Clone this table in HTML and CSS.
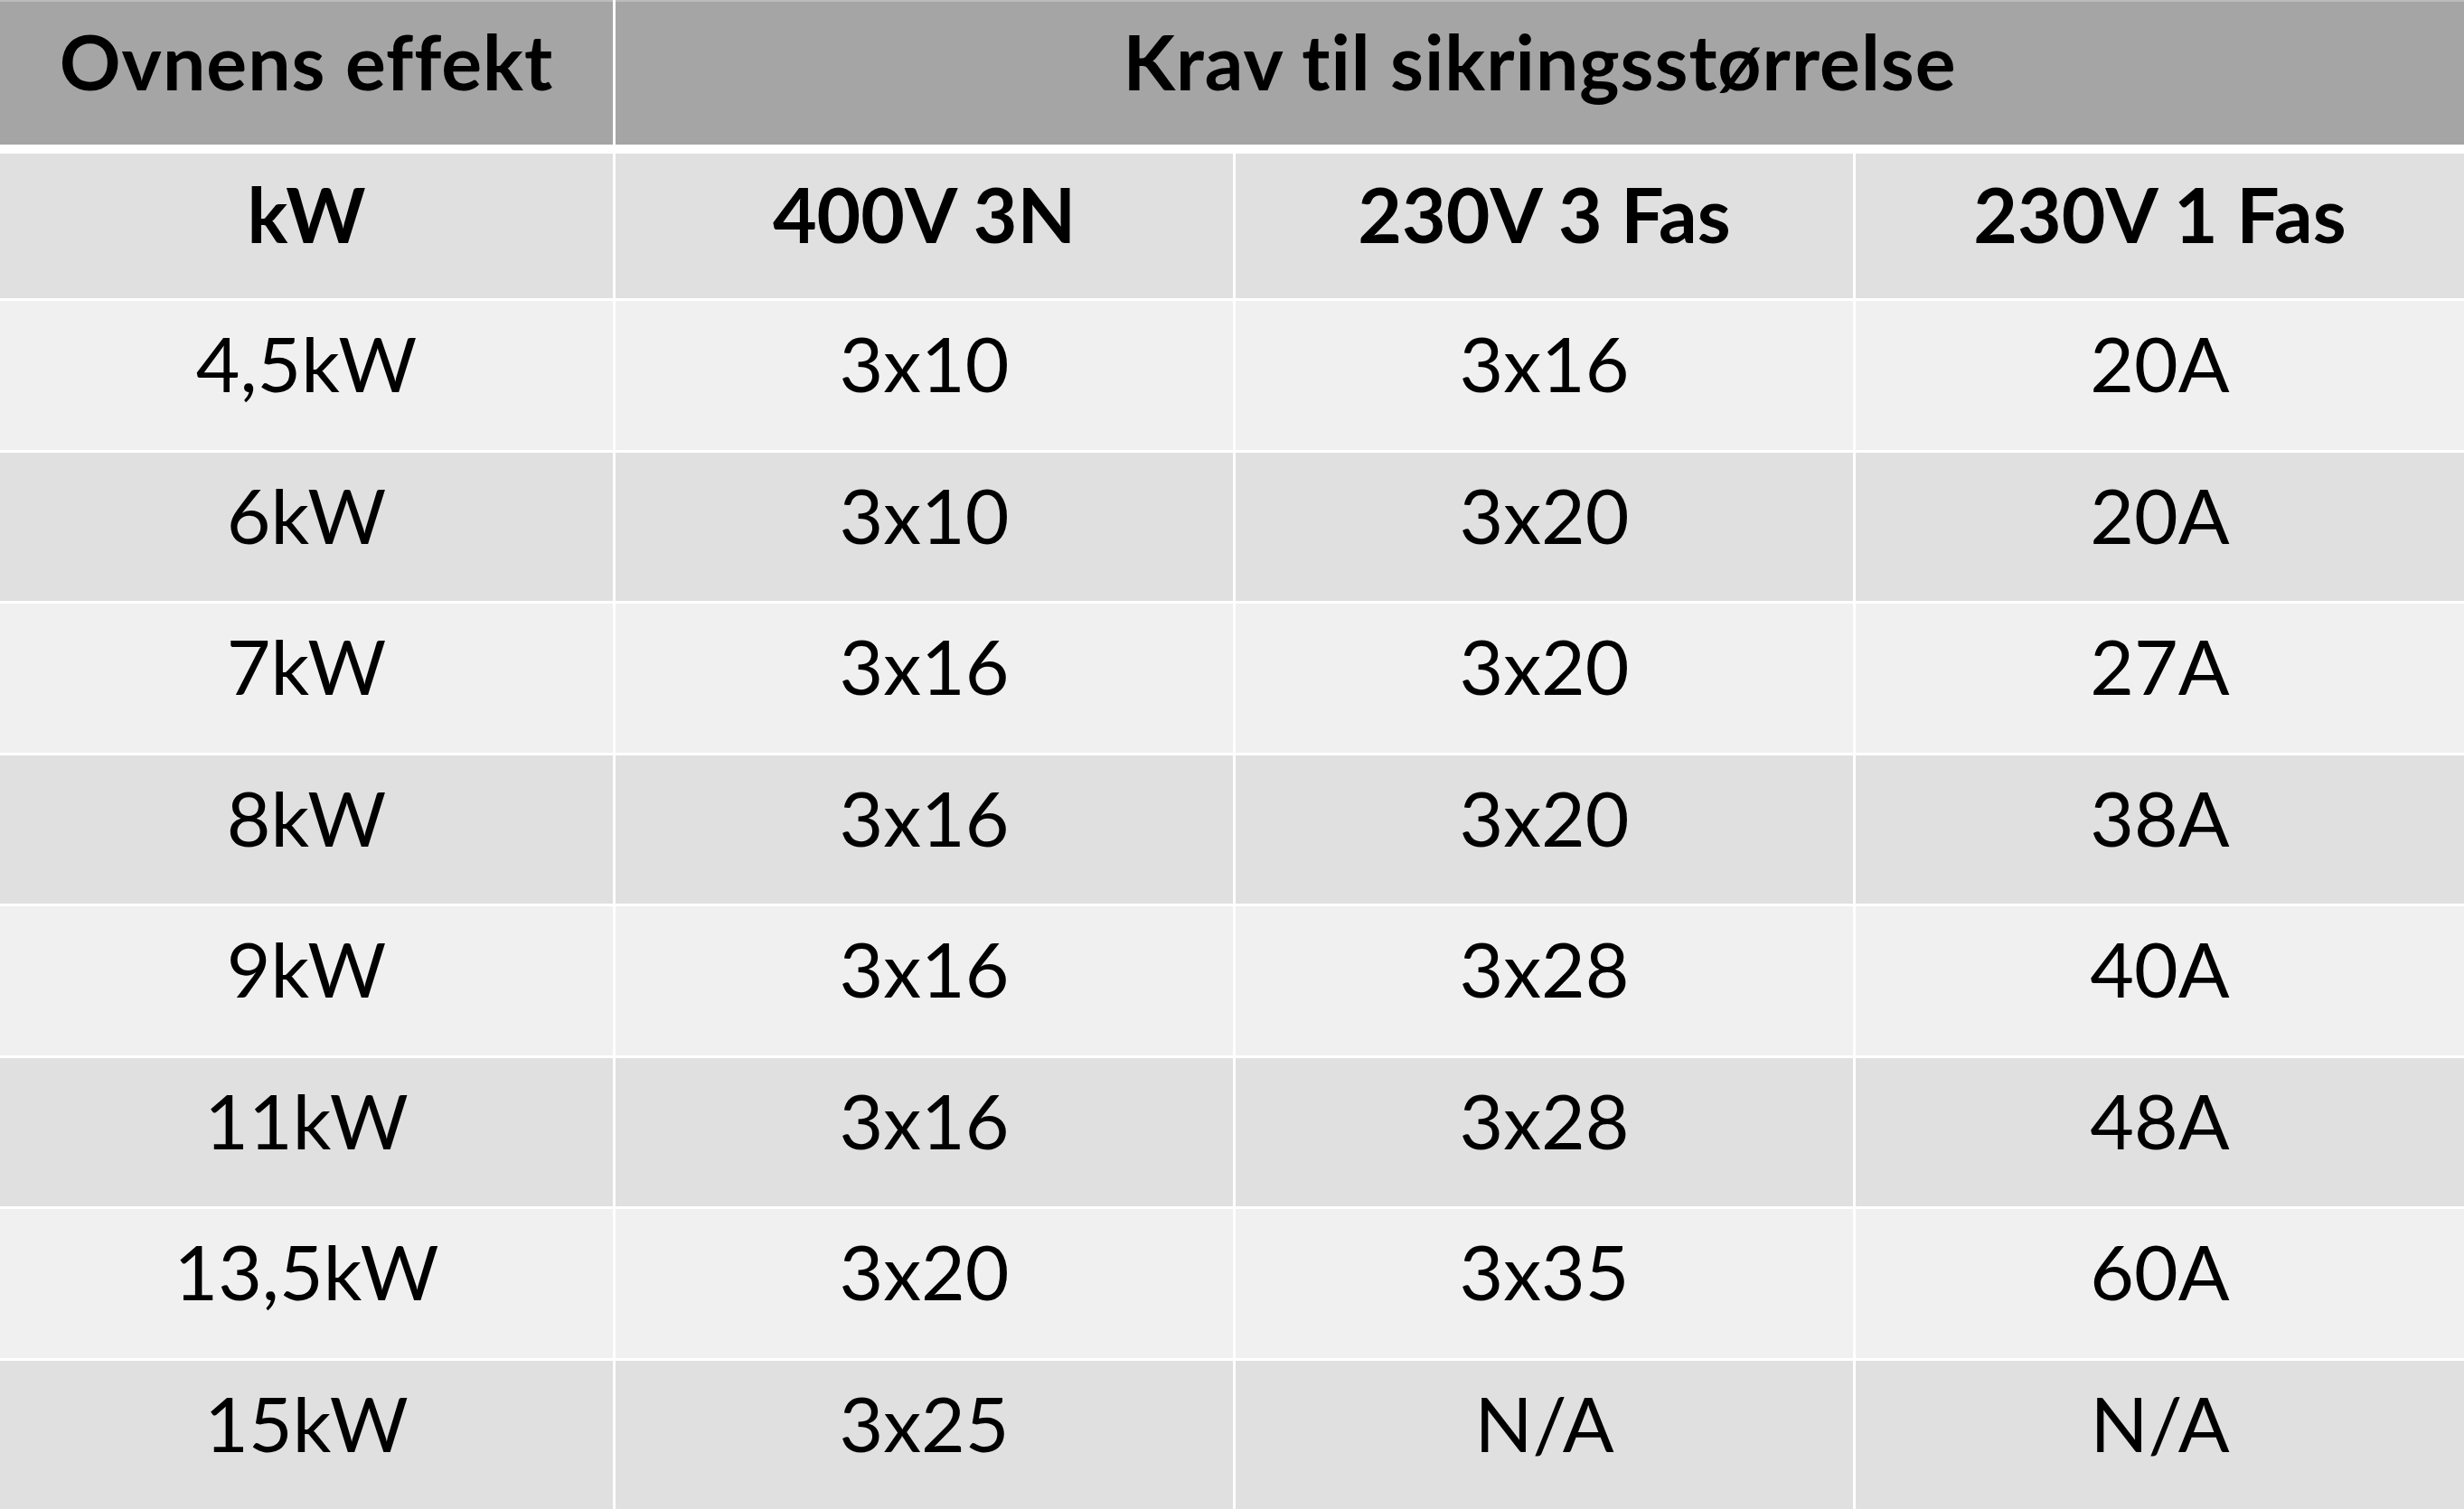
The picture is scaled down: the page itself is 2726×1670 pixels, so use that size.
FILE: index.html
```html
<!DOCTYPE html>
<html lang="no">
<head>
<meta charset="utf-8">
<title>Krav til sikringsstørrelse</title>
<link rel="stylesheet" href="styles.css">
</head>
<body>
<div class="sheet">
  <div class="head-grid">
    <div class="cell head">Ovnens effekt</div>
    <div class="cell head span3">Krav til sikringsstørrelse</div>
  </div>
  <div class="body-grid">
    <div class="cell sub">kW</div>
    <div class="cell sub">400V 3N</div>
    <div class="cell sub">230V 3 Fas</div>
    <div class="cell sub">230V 1 Fas</div>

    <div class="cell light">4,5kW</div>
    <div class="cell light">3x10</div>
    <div class="cell light">3x16</div>
    <div class="cell light">20A</div>

    <div class="cell dark">6kW</div>
    <div class="cell dark">3x10</div>
    <div class="cell dark">3x20</div>
    <div class="cell dark">20A</div>

    <div class="cell light">7kW</div>
    <div class="cell light">3x16</div>
    <div class="cell light">3x20</div>
    <div class="cell light">27A</div>

    <div class="cell dark">8kW</div>
    <div class="cell dark">3x16</div>
    <div class="cell dark">3x20</div>
    <div class="cell dark">38A</div>

    <div class="cell light">9kW</div>
    <div class="cell light">3x16</div>
    <div class="cell light">3x28</div>
    <div class="cell light">40A</div>

    <div class="cell dark">11kW</div>
    <div class="cell dark">3x16</div>
    <div class="cell dark">3x28</div>
    <div class="cell dark">48A</div>

    <div class="cell light">13,5kW</div>
    <div class="cell light">3x20</div>
    <div class="cell light">3x35</div>
    <div class="cell light">60A</div>

    <div class="cell dark">15kW</div>
    <div class="cell dark">3x25</div>
    <div class="cell dark">N/A</div>
    <div class="cell dark">N/A</div>
  </div>
</div>
</body>
</html>
```
FILE: styles.css
```css
html, body {
  margin: 0;
  padding: 0;
  background: #ffffff;
}

.sheet {
  width: 2726px;
  height: 1670px;
  display: flex;
  flex-direction: column;
  gap: 10px;
  overflow: hidden;
  font-family: "Lato", "Open Sans", sans-serif;
  color: #000;
}

.head-grid {
  display: grid;
  grid-template-columns: 678px 1fr;
  column-gap: 3px;
  height: 160px;
  flex: none;
}

.body-grid {
  display: grid;
  grid-template-columns: 678px 683px 683px 1fr;
  grid-template-rows: 160px repeat(8, 1fr);
  gap: 3px;
  height: 1500px;
  flex: none;
}

.cell {
  display: flex;
  align-items: center;
  justify-content: center;
  box-sizing: border-box;
  padding-bottom: 26px;
  font-size: 84px;
  line-height: 1;
  white-space: nowrap;
}

.head {
  background: #a5a5a5;
  font-weight: 700;
  letter-spacing: 1px;
  border-top: 2px solid #bcbcbc;
}

.sub {
  background: #e0e0e0;
  font-weight: 700;
}

.light {
  background: #f0f0f0;
  font-weight: 400;
}

.dark {
  background: #e0e0e0;
  font-weight: 400;
}
```
